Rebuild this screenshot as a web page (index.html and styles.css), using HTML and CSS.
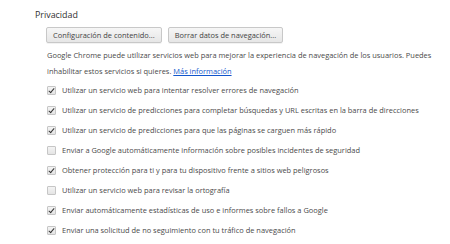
FILE: index.html
```html
<!DOCTYPE html>
<html lang="es">
<head>
    <meta charset="UTF-8">
    <title>Privacidad</title>
    <link rel="stylesheet" href="styles.css">
</head>
<body>
    <!-- Sección de privacidad -->
    <section class="privacy">
        <h3>Privacidad</h3>
        <div class="privacy-body">
            <div class="buttons">
                <button class="btn">Configuración de contenido...</button>
                <button class="btn">Borrar datos de navegación...</button>
            </div>
            <p class="desc">Google Chrome puede utilizar servicios web para mejorar la experiencia de navegación de los usuarios. Puedes inhabilitar estos servicios si quieres. <a href="#">Más información</a></p>

            <div class="options">
                <label class="option"><span class="check on"></span>Utilizar un servicio web para intentar resolver errores de navegación</label>
                <label class="option"><span class="check on"></span>Utilizar un servicio de predicciones para completar búsquedas y URL escritas en la barra de direcciones</label>
                <label class="option"><span class="check on"></span>Utilizar un servicio de predicciones para que las páginas se carguen más rápido</label>
                <label class="option"><span class="check"></span>Enviar a Google automáticamente información sobre posibles incidentes de seguridad</label>
                <label class="option"><span class="check on"></span>Obtener protección para ti y para tu dispositivo frente a sitios web peligrosos</label>
                <label class="option"><span class="check"></span>Utilizar un servicio web para revisar la ortografía</label>
                <label class="option"><span class="check on"></span>Enviar automáticamente estadísticas de uso e informes sobre fallos a Google</label>
                <label class="option"><span class="check on"></span>Enviar una solicitud de no seguimiento con tu tráfico de navegación</label>
            </div>
        </div>
    </section>
</body>
</html>
```

FILE: styles.css
```css
/* Estilos generales */
body {
    margin: 0;
    background-color: #fff;
    font-family: "Open Sans", Arial, sans-serif;
    font-size: 7.45px;
    color: #4a4a4a;
}

.privacy {
    padding: 8px 0 0 35px;
}

.privacy h3 {
    margin: 0;
    font-size: 8.9px;
    font-weight: normal;
    color: #303030;
    line-height: 14px;
}

.privacy-body {
    padding-left: 11px;
}

/* Botones */
.buttons {
    display: flex;
    gap: 6px;
    margin-top: 5px;
}

.btn {
    height: 16px;
    padding: 0 6px;
    font-family: inherit;
    font-size: 7.45px;
    color: #444;
    border: 1px solid #c8c8c8;
    border-radius: 2px;
    background: linear-gradient(#f6f6f6, #e6e6e6);
    box-shadow: 0 1px 0 rgba(0, 0, 0, 0.05);
}

/* Descripción */
.desc {
    margin: 4px 0 0 1px;
    line-height: 16px;
    width: 395px;
}

.desc a {
    color: #15c;
}

/* Casillas */
.options {
    display: flex;
    flex-direction: column;
    margin-top: 1px;
}

.option {
    display: flex;
    align-items: center;
    height: 20px;
    gap: 6px;
    padding-left: 1px;
}

.check {
    width: 7px;
    height: 7px;
    border: 1px solid #c6c6c6;
    border-radius: 1px;
    background: linear-gradient(#f4f4f4, #e4e4e4);
    position: relative;
}

.check.on::after {
    content: "";
    position: absolute;
    left: 2px;
    top: 0;
    width: 2px;
    height: 5px;
    border: solid #333;
    border-width: 0 1.5px 1.5px 0;
    transform: rotate(40deg);
}
```
